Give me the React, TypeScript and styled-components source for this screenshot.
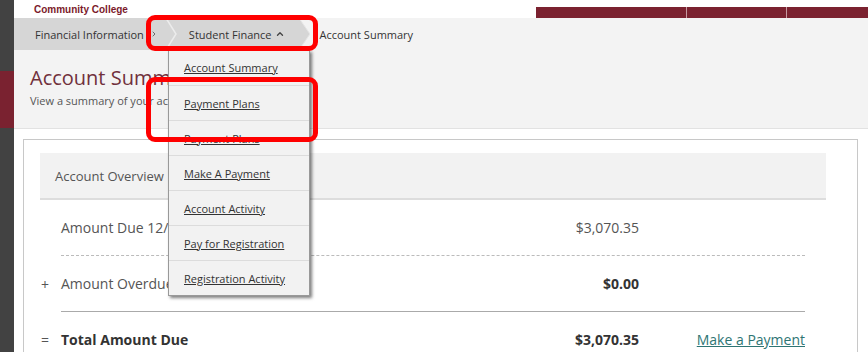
import styled, { createGlobalStyle } from "styled-components";
import { ChevronUp, ChevronRight } from "lucide-react";

const GlobalStyle = createGlobalStyle`
  html, body {
    margin: 0;
    padding: 0;
    background: #ffffff;
    font-family: "Open Sans", "Liberation Sans", Arial, sans-serif;
  }
`;

const Frame = styled.div`
  position: relative;
  width: 868px;
  height: 352px;
  overflow: hidden;
  display: flex;
`;

const Rail = styled.div`
  width: 14px;
  flex-shrink: 0;
  display: flex;
  flex-direction: column;
  background: #424242;
`;

const RailAccent = styled.div`
  margin-top: 71px;
  height: 57px;
  background: #7a2230;
`;

const Main = styled.div`
  flex: 1;
  display: flex;
  flex-direction: column;
  min-width: 0;
`;

const Header = styled.div`
  height: 18px;
  flex-shrink: 0;
  display: flex;
  align-items: flex-end;
  background: #ffffff;
`;

const Brand = styled.div`
  margin-left: 20px;
  margin-bottom: 2px;
  font-family: "Liberation Sans", Arial, sans-serif;
  font-weight: bold;
  font-size: 10px;
  line-height: 12px;
  color: #7b1a2b;
`;

const NavBars = styled.div`
  margin-left: auto;
  display: flex;
  height: 11px;
`;

const NavBar = styled.div<{ $w: number }>`
  width: ${(p) => p.$w}px;
  background: #7b2230;
  border-left: 1px solid #c79aa1;
  &:first-child {
    border-left: none;
  }
`;

const Crumbs = styled.div`
  height: 32px;
  flex-shrink: 0;
  display: flex;
  align-items: stretch;
  background: #f3f3f3;
  font-size: 11px;
  color: #333;
`;

const Crumb = styled.div<{ $pad: number; $end?: number; $gap?: number }>`
  display: flex;
  align-items: center;
  gap: ${(p) => p.$gap ?? 6}px;
  padding-left: ${(p) => p.$pad}px;
  padding-right: ${(p) => p.$end ?? 0}px;
  background: #d6d6d6;
`;

const CrumbLast = styled.div`
  display: flex;
  align-items: center;
  padding-left: 9px;
`;

const Arrow = styled.svg`
  display: block;
  flex-shrink: 0;
`;

const Menu = styled.div`
  position: absolute;
  left: 168px;
  top: 50px;
  width: 140px;
  background: #f2f2f2;
  border: 1px solid #999;
  border-top: none;
  box-shadow: 2px 2px 3px rgba(0, 0, 0, 0.5);
  z-index: 5;
`;

const MenuItem = styled.a`
  display: flex;
  align-items: center;
  height: 34px;
  padding-left: 15px;
  border-bottom: 1px solid #dcdcdc;
  font-size: 11px;
  color: #333;
  text-decoration: underline;
  &:first-child {
    height: 35px;
  }
  &:last-child {
    border-bottom: none;
  }
`;

const PageHead = styled.div`
  height: 79px;
  flex-shrink: 0;
  background: #f3f3f3;
  border-bottom: 1px solid #e2e2e2;
  padding: 14px 0 0 16px;
  box-sizing: border-box;
`;

const Title = styled.h1`
  margin: 0;
  font-size: 20px;
  font-weight: 400;
  line-height: 28px;
  color: #70303c;
`;

const Subtitle = styled.div`
  margin-top: 1px;
  font-size: 11px;
  color: #555;
`;

const Body = styled.div`
  flex: 1;
  padding: 10px 10px 0 9px;
`;

const Card = styled.div`
  height: 100%;
  border: 1px solid #c8c8c8;
  border-bottom: none;
  padding: 13px 31px 0 16px;
  box-sizing: border-box;
`;

const Overview = styled.div`
  height: 45px;
  display: flex;
  align-items: center;
  padding-left: 15px;
  background: #f2f2f2;
  border-bottom: 2px solid #dddddd;
  font-size: 13px;
  color: #555;
`;

const Row = styled.div`
  display: flex;
  margin-right: 21px;
`;

const Sign = styled.div`
  width: 21px;
  padding-left: 1px;
  box-sizing: border-box;
  display: flex;
  align-items: center;
  font-size: 14px;
  color: #555;
`;

const RowBody = styled.div<{ $line: "dashed" | "solid" | "none"; $bold?: boolean }>`
  flex: 1;
  height: 55px;
  display: grid;
  grid-template-columns: 1fr auto 166px;
  align-items: center;
  border-bottom: ${(p) =>
    p.$line === "none" ? "none" : `1px ${p.$line} ${p.$line === "dashed" ? "#bbbbbb" : "#aaaaaa"}`};
  font-size: 14px;
  font-weight: ${(p) => (p.$bold ? 700 : 400)};
  color: ${(p) => (p.$bold ? "#333" : "#555")};
`;

const Amount = styled.div<{ $bold?: boolean }>`
  text-align: right;
  font-weight: ${(p) => (p.$bold ? 700 : 400)};
  color: ${(p) => (p.$bold ? "#333" : "#555")};
`;

const PayLink = styled.a`
  justify-self: end;
  font-weight: 400;
  color: #2e7574;
  text-decoration: underline;
`;

const Callout = styled.div<{ $x: number; $y: number; $w: number; $h: number }>`
  position: absolute;
  left: ${(p) => p.$x}px;
  top: ${(p) => p.$y}px;
  width: ${(p) => p.$w}px;
  height: ${(p) => p.$h}px;
  border: 5px solid #ff0000;
  border-radius: 9px;
  box-sizing: border-box;
  z-index: 10;
  pointer-events: none;
`;

const menuItems = [
  "Account Summary",
  "Payment Plans",
  "Payment Plans",
  "Make A Payment",
  "Account Activity",
  "Pay for Registration",
  "Registration Activity",
];

export default function App() {
  return (
    <>
      <GlobalStyle />
      <Frame>
        <Rail>
          <RailAccent />
        </Rail>
        <Main>
          <Header>
            <Brand>Community College</Brand>
            <NavBars>
              <NavBar $w={150} />
              <NavBar $w={99} />
              <NavBar $w={81} />
            </NavBars>
          </Header>

          <Crumbs>
            <Crumb $pad={21} $end={4}>
              Financial Information
              <ChevronRight size={8} strokeWidth={2.5} color="#555" />
            </Crumb>
            <Arrow width="16" height="32" viewBox="0 0 16 32">
              <rect width="16" height="32" fill="#d6d6d6" />
              <polyline points="4,0 14,16 4,32" fill="none" stroke="#ececec" strokeWidth="1.5" />
            </Arrow>
            <Crumb $pad={11} $end={14} $gap={4}>
              Student Finance
              <ChevronUp size={10} strokeWidth={3.2} color="#444" />
            </Crumb>
            <Arrow width="11" height="32" viewBox="0 0 11 32">
              <polygon points="0,0 11,16 0,32" fill="#d6d6d6" />
              <polyline points="0,0 11,16 0,32" fill="none" stroke="#e6e6e6" strokeWidth="1" />
            </Arrow>
            <CrumbLast>Account Summary</CrumbLast>
          </Crumbs>

          <PageHead>
            <Title>Account Summary</Title>
            <Subtitle>View a summary of your account</Subtitle>
          </PageHead>

          <Body>
            <Card>
              <Overview>Account Overview</Overview>
              <Row>
                <Sign />
                <RowBody $line="dashed">
                  <span>Amount Due 12/01/2023</span>
                  <Amount>$3,070.35</Amount>
                  <span />
                </RowBody>
              </Row>
              <Row>
                <Sign>+</Sign>
                <RowBody $line="solid">
                  <span>Amount Overdue</span>
                  <Amount $bold>$0.00</Amount>
                  <span />
                </RowBody>
              </Row>
              <Row>
                <Sign>=</Sign>
                <RowBody $line="none" $bold>
                  <span>Total Amount Due</span>
                  <Amount $bold>$3,070.35</Amount>
                  <PayLink href="#">Make a Payment</PayLink>
                </RowBody>
              </Row>
            </Card>
          </Body>
        </Main>

        <Menu>
          {menuItems.map((m, i) => (
            <MenuItem key={i} href="#">
              {m}
            </MenuItem>
          ))}
        </Menu>

        <Callout $x={146} $y={15} $w={172} $h={36} />
        <Callout $x={146} $y={77} $w={172} $h={65} />
      </Frame>
    </>
  );
}
